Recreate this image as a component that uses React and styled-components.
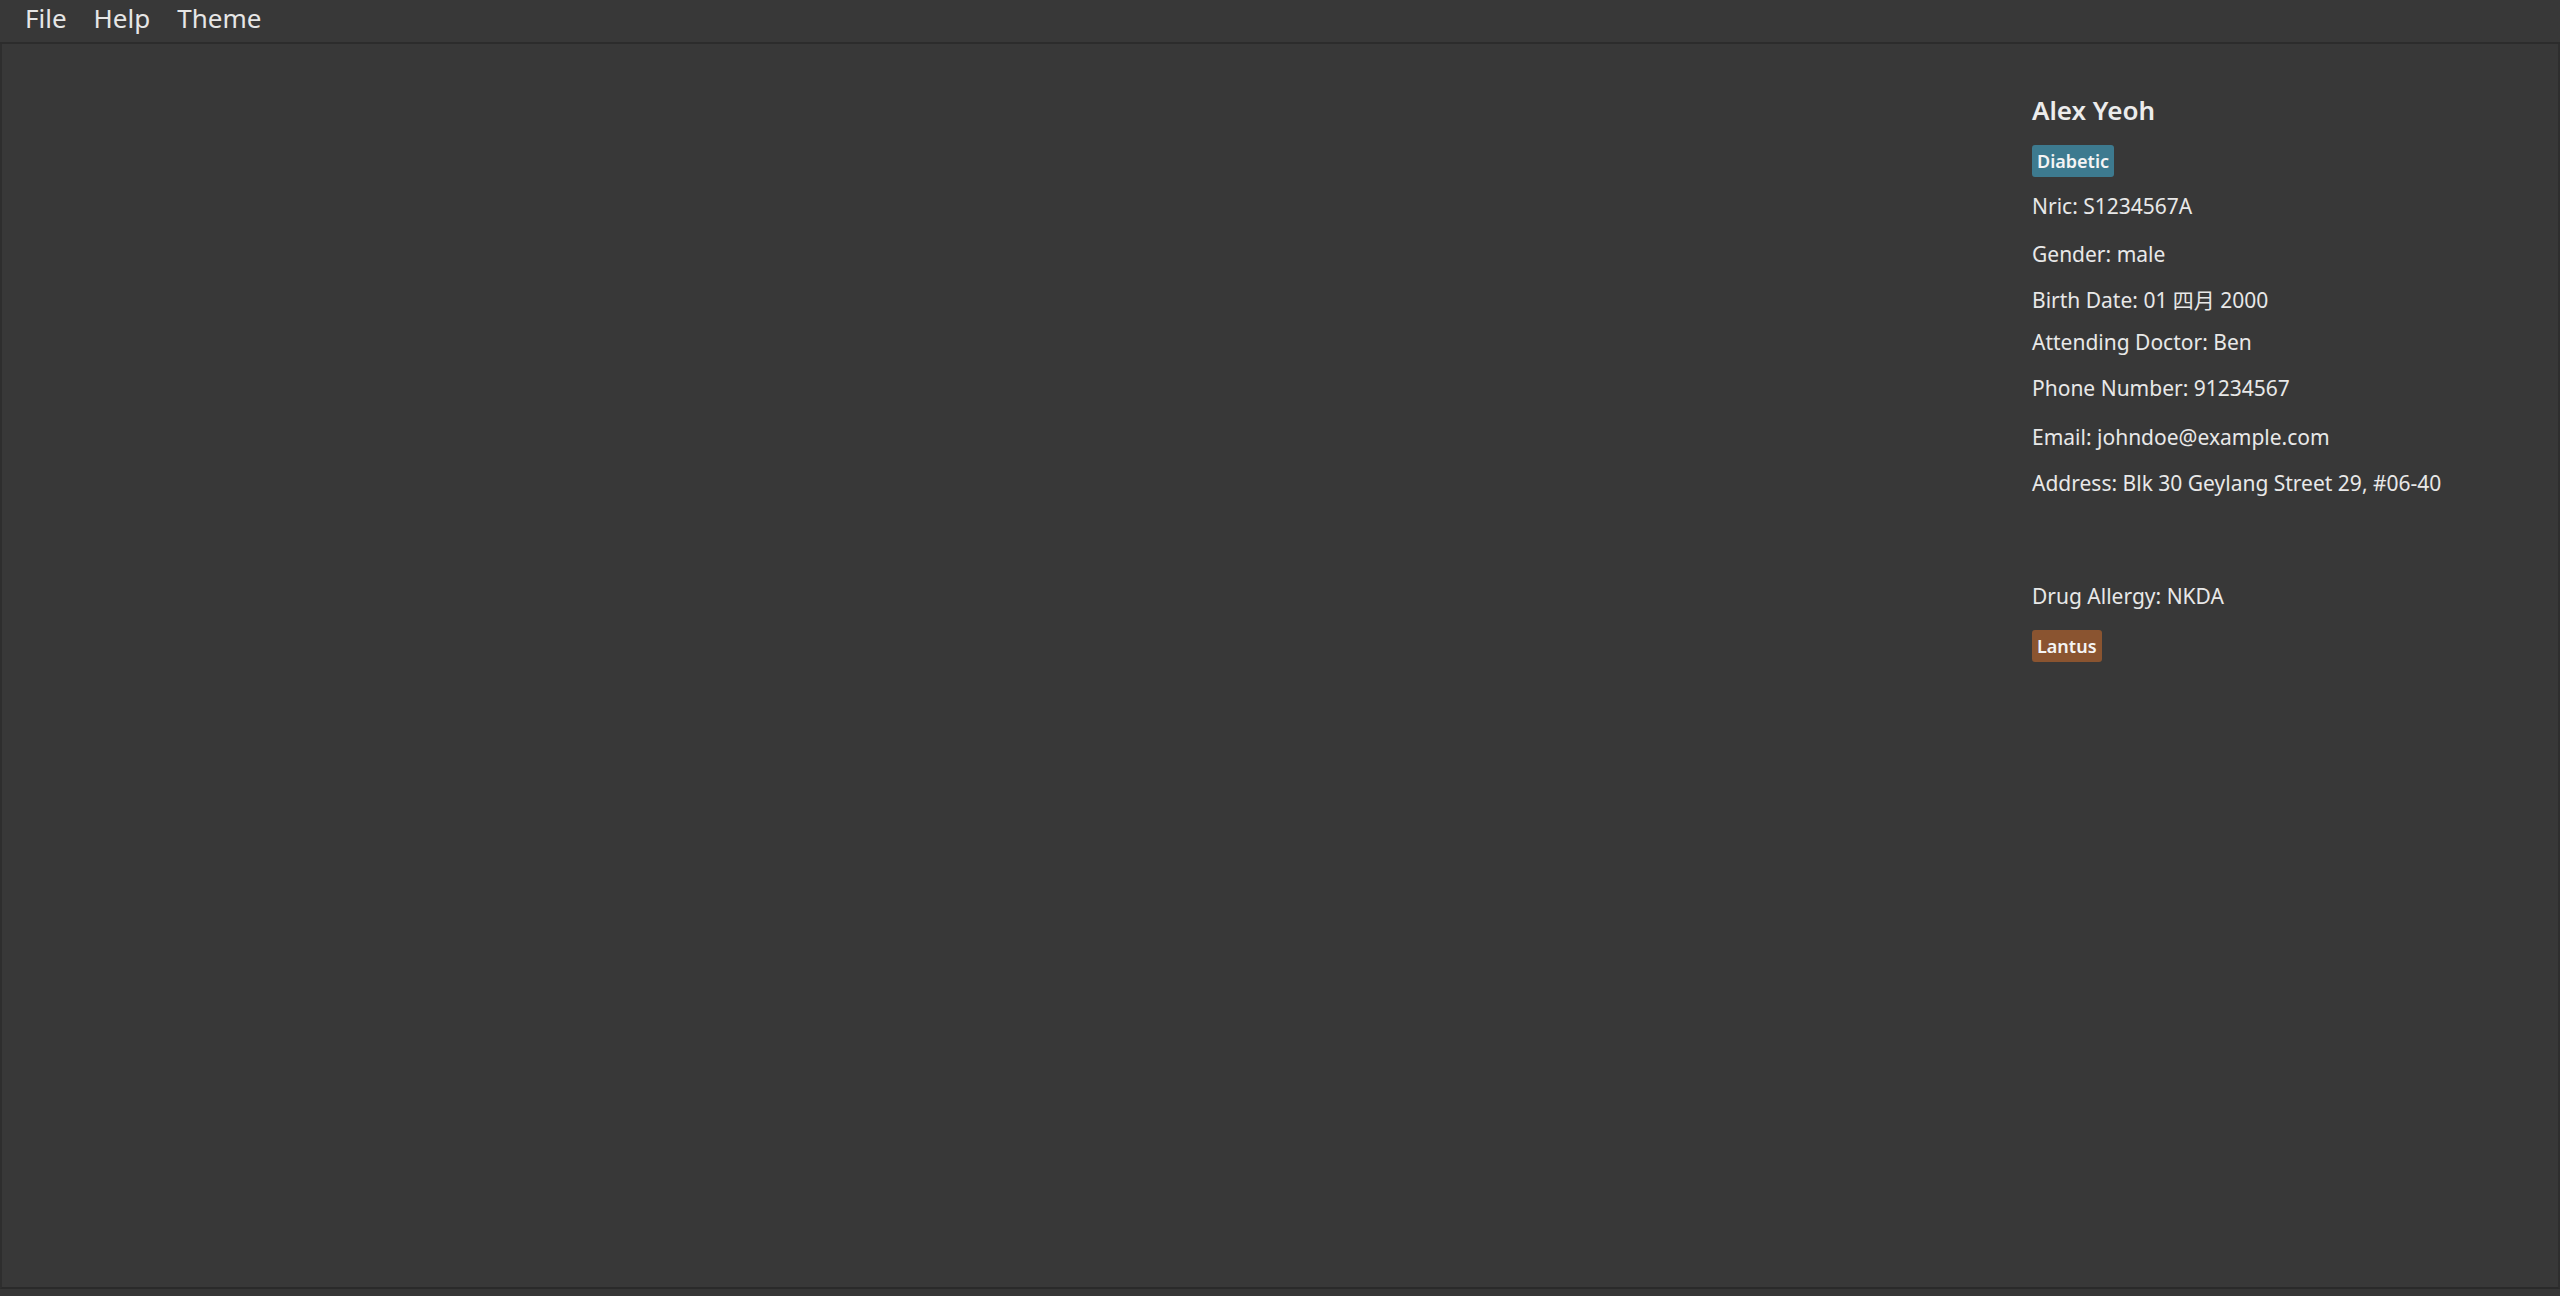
import React from "react"
import styled, { createGlobalStyle } from "styled-components"

const GlobalStyle = createGlobalStyle`
  html, body {
    margin: 0;
    padding: 0;
    background: #383838;
  }
  body {
    font-family: "Noto Sans", "Noto Sans CJK SC", sans-serif;
    color: #e8e8e8;
  }
`

const patient = {
  name: "Alex Yeoh",
  conditions: ["Diabetic"],
  fields: [
    { label: "Nric", value: "S1234567A", top: 14 },
    { label: "Gender", value: "male", top: 18 },
    { label: "Birth Date", value: "01 四月 2000", top: 16 },
    { label: "Attending Doctor", value: "Ben", top: 12 },
    { label: "Phone Number", value: "91234567", top: 16 },
    { label: "Email", value: "johndoe@example.com", top: 19 },
    { label: "Address", value: "Blk 30 Geylang Street 29, #06-40", top: 16 },
  ],
  allergy: "NKDA",
  medicines: ["Lantus"],
}

export default function App() {
  return (
    <>
      <GlobalStyle />
      <Window>
        <MenuBar>
          <MenuItem>File</MenuItem>
          <MenuItem>Help</MenuItem>
          <MenuItem>Theme</MenuItem>
        </MenuBar>

        <Main>
          <ListArea />
          <DetailPane>
            <Name>{patient.name}</Name>
            <Tags $top={18}>
              {patient.conditions.map(c => (
                <Tag key={c} $kind="condition">{c}</Tag>
              ))}
            </Tags>

            {patient.fields.map(f => (
              <Field key={f.label} $top={f.top}>
                {f.label}: {f.value}
              </Field>
            ))}

            <Field $top={83}>Drug Allergy: {patient.allergy}</Field>
            <Tags $top={19}>
              {patient.medicines.map(m => (
                <Tag key={m} $kind="medicine">{m}</Tag>
              ))}
            </Tags>
          </DetailPane>
        </Main>

        <StatusBar />
      </Window>
    </>
  )
}

const Window = styled.div`
  display: flex;
  flex-direction: column;
  height: 1296px;
  background: #383838;
`

const MenuBar = styled.div`
  display: flex;
  align-items: center;
  height: 42px;
  padding: 0 0 0 13px;
  gap: 3px;
  background: #383838;
  border-bottom: 2px solid #2c2c2c;
`

const MenuItem = styled.div`
  font-size: 26px;
  padding: 0 12px 5px;
  color: #e6e6e6;
  line-height: 37px;
`

const Main = styled.div`
  flex: 1;
  display: flex;
  border-left: 2px solid #2e2e2e;
  border-right: 2px solid #2e2e2e;
  border-bottom: 2px solid #2a2a2a;
`

const ListArea = styled.div`
  flex: 1;
`

const DetailPane = styled.div`
  width: 526px;
  padding-top: 49px;
  display: flex;
  flex-direction: column;
  align-items: flex-start;
`

const Name = styled.div`
  font-size: 26px;
  font-weight: 600;
  line-height: 34px;
  color: #ececec;
`

const Tags = styled.div`
  display: flex;
  gap: 8px;
  margin-top: ${p => (p.$top ? p.$top : 12)}px;
`

const Tag = styled.span`
  font-size: 18px;
  font-weight: 600;
  line-height: 32px;
  height: 32px;
  padding: 0 5px;
  border-radius: 3px;
  color: #f4f4f4;
  background: ${p => (p.$kind === "medicine" ? "#8a5430" : "#3d7a8f")};
`

const Field = styled.div`
  font-size: 21px;
  line-height: 30px;
  margin-top: ${p => p.$top}px;
  color: #e8e8e8;
  white-space: nowrap;
`

const StatusBar = styled.div`
  height: 7px;
  background: #363636;
`
